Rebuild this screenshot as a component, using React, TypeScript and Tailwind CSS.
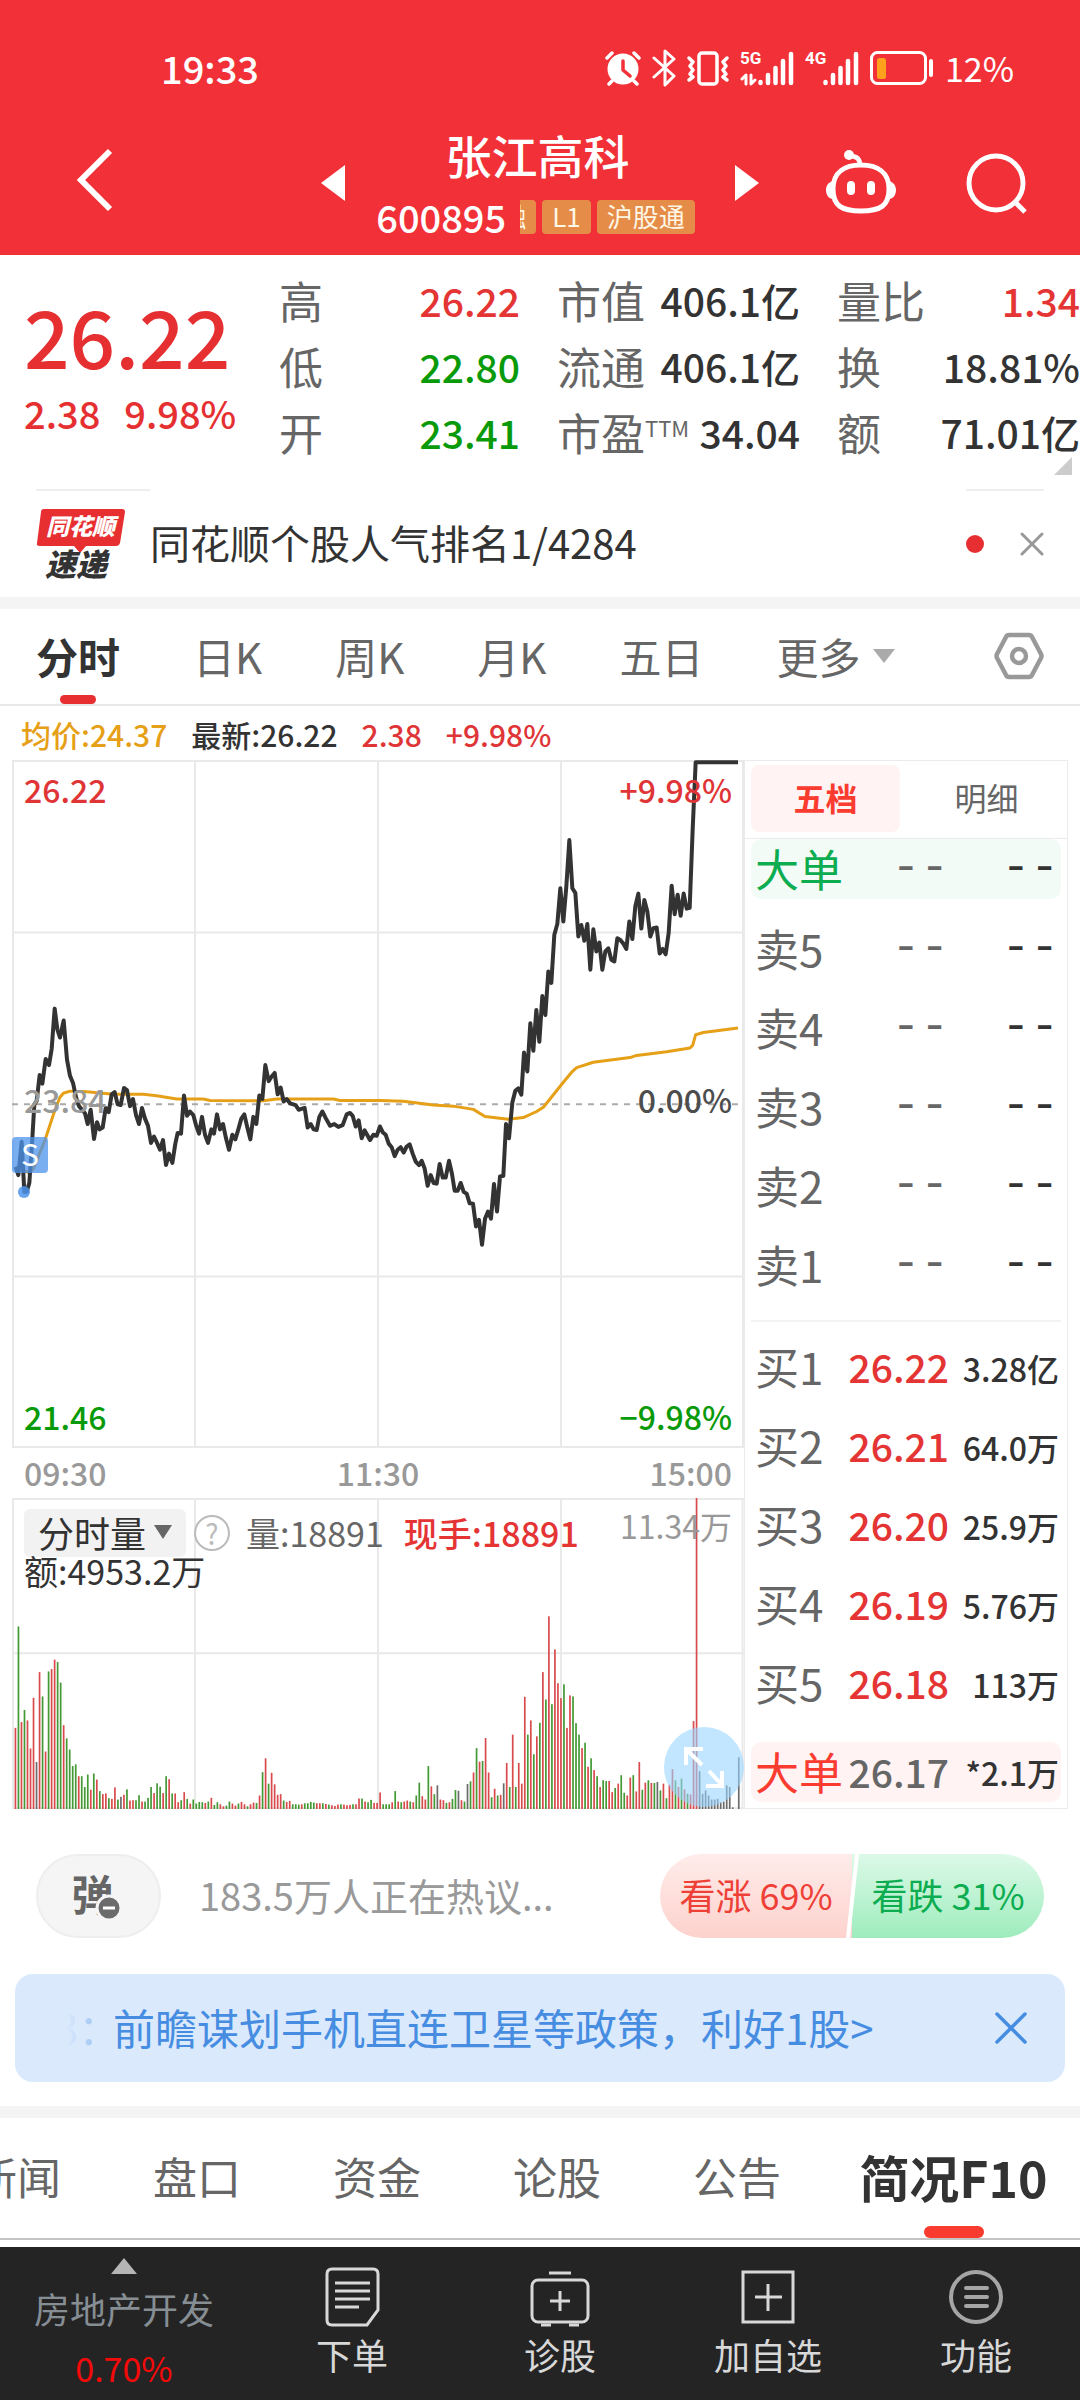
import type { ReactNode } from "react"
import clsx from "clsx"

// Minute prices as [x, y] in chart units, one array per session
const MORNING: number[][] = [
  [47, 1195], [55, 1218], [65, 1125], [73, 1265], [80, 1265], [88, 1240], [97, 1115], [103, 1020], [110, 1010],
  [119, 938], [127, 962], [137, 893], [147, 910], [155, 865], [164, 752], [172, 810], [180, 833], [191, 785],
  [201, 895], [210, 940], [219, 960], [228, 1000], [237, 1025], [246, 1035], [255, 1045], [263, 1075], [272, 1035],
  [282, 1117], [291, 1070], [299, 1090], [308, 1085], [317, 1030], [326, 1042], [335, 992], [344, 986], [353, 1020],
  [362, 1022], [372, 974], [381, 980], [390, 1025], [399, 1005], [408, 1050], [417, 1075], [426, 1030], [435, 1060],
  [444, 1080], [453, 1128], [462, 1110], [471, 1128], [480, 1147], [489, 1120], [498, 1190], [507, 1158], [517, 1184],
  [526, 1130], [533, 1100], [543, 1102], [552, 995], [561, 1052], [570, 1040], [580, 1050], [588, 1078], [597, 1102],
  [606, 1055], [615, 1105], [624, 1128], [634, 1090], [642, 1102], [651, 1048], [660, 1090], [669, 1075], [678, 1115],
  [687, 1147], [697, 1105], [706, 1118], [715, 1090], [724, 1060], [733, 1048], [742, 1085], [751, 1118], [760, 1055],
  [769, 1075], [778, 995], [787, 1005], [796, 910], [806, 955], [815, 942], [824, 932], [833, 992], [842, 973],
  [851, 1012], [860, 1005], [870, 1017], [887, 1022], [896, 1035], [914, 1030], [923, 1085], [932, 1075], [941, 1090],
  [950, 1092], [958, 1055], [967, 1040], [978, 1060], [990, 1080], [1003, 1075], [1015, 1083], [1028, 1078],
  [1040, 1048], [1050, 1044], [1058, 1052], [1067, 1082], [1076, 1065], [1085, 1115], [1094, 1093], [1103, 1108],
]
const AFTERNOON: number[][] = [
  [0, 1120], [10, 1105], [20, 1108], [30, 1082], [38, 1098], [47, 1105], [56, 1130], [65, 1140], [74, 1165], [83, 1147],
  [92, 1140], [101, 1155], [110, 1138], [119, 1132], [128, 1158], [137, 1180], [147, 1190], [155, 1178], [164, 1200],
  [173, 1248], [182, 1218], [191, 1240], [200, 1242], [209, 1187], [218, 1225], [227, 1225], [237, 1178], [246, 1215],
  [254, 1262], [263, 1262], [272, 1240], [281, 1265], [290, 1270], [299, 1297], [309, 1298], [318, 1362], [327, 1343],
  [336, 1413], [345, 1340], [354, 1320], [363, 1340], [372, 1243], [381, 1320], [390, 1222], [400, 1220], [408, 1075],
  [417, 1115], [427, 1015], [436, 982], [445, 975], [454, 993], [462, 875], [472, 928], [481, 793], [490, 870],
  [499, 756], [508, 845], [517, 717], [526, 770], [535, 648], [544, 680], [553, 545], [562, 515], [571, 415],
  [580, 508], [589, 410], [598, 280], [607, 415], [616, 428], [625, 550], [634, 518], [643, 562], [652, 515],
  [661, 643], [670, 530], [679, 592], [688, 567], [697, 643], [706, 592], [715, 583], [724, 615], [733, 620],
  [742, 555], [751, 560], [760, 570], [769, 585], [778, 508], [787, 557], [796, 465], [805, 430], [814, 528],
  [823, 448], [832, 480], [841, 550], [850, 527], [860, 525], [869, 598], [878, 585], [887, 600], [896, 540],
  [905, 408], [914, 488], [923, 433], [932, 492], [941, 430], [950, 472], [959, 470], [968, 250], [977, 62], [1104, 62],
]
const AVG_MORNING: number[][] = [
  [47, 1195], [88, 1212], [100, 1200], [135, 1120], [165, 1035], [180, 1000], [190, 989], [210, 983], [260, 985],
  [340, 992], [430, 992], [470, 996], [530, 1005], [610, 1005], [630, 1009], [790, 1010], [830, 1005], [1000, 1005],
  [1020, 1009], [1100, 1009],
]
const AVG_AFTERNOON: number[][] = [
  [30, 1009], [100, 1011], [190, 1022], [250, 1025], [310, 1034], [345, 1054], [415, 1062], [460, 1057], [500, 1040],
  [520, 1028], [540, 1005], [580, 958], [605, 930], [620, 917], [670, 902], [780, 889], [800, 883], [890, 873],
  [960, 862], [968, 855], [977, 825], [1000, 819], [1104, 806],
]

const toPoints = (am: number[][], pm: number[][]) =>
  [...am, ...pm.map(([x, y]) => [x + 1110, y])].map((p) => p.join(",")).join(" ")

// Volume per minute: colour letter + height
const VOLUME = (
  "r240 g540 r257 g293 r262 r179 r329 k139 r405 g333 r170 g407 r414 r442 g435 g374 r248 g209 g176 g127 " +
  "g132 r97 g97 g65 g102 r57 g105 r87 g53 r44 r46 g32 r30 r64 g28 k36 r42 g58 r25 r26 " +
  "g26 g41 r22 g22 g33 g65 r47 g76 g66 r47 g97 r88 g46 r46 r20 g26 r50 g30 r16 g28 " +
  "g16 g21 g20 r18 g22 r33 g12 g20 r14 r8 g10 g22 r16 r10 g16 r21 r14 g8 r14 r19 " +
  "g18 r40 g109 r150 g75 r107 r73 r42 r44 g25 r21 r24 g14 g14 g13 r14 g17 g17 g21 g19 " +
  "r17 r17 g17 r15 g13 r11 r9 r13 g14 r13 r11 r12 g14 r14 r31 g31 r22 g20 g27 r18 " +
  "r18 r49 g14 g14 g14 r20 g53 r22 g20 r22 r25 g22 r20 g40 g78 r38 r28 g127 r67 g44 " +
  "k70 r28 r26 g18 r20 g30 g56 k54 r26 g22 k74 g82 r108 g180 r140 g142 r210 r108 g35 r60 " +
  "g40 r42 k76 r136 g65 r220 g65 r136 r75 r332 g220 r262 g162 r215 g255 r405 g324 r570 g310 r472 " +
  "r372 r328 g369 r240 r336 g333 g254 g220 r180 g196 r125 g150 r115 g97 r65 g85 g83 r83 r50 g62 " +
  "r75 g100 g48 r40 r93 g100 r52 r139 g57 r78 g85 r77 g77 k80 g55 r75 g32 r72 r118 g85 " +
  "r65 g90 r58 g45 r43 r260 r920 k112 k45 k55 k40 k28 k28 k30 k20 k22 k70 k65 k5 k0 k153"
).split(" ")

const BAR_COLORS: Record<string, string> = { r: "#d94a4c", g: "#439a35", k: "#6b6b6b" }

const STATS = [
  ["高", "26.22", "text-[#e43434]"],
  ["市值", "406.1亿", "text-[#333]"],
  ["量比", "1.34", "text-[#e43434]"],
  ["低", "22.80", "text-[#099a09]"],
  ["流通", "406.1亿", "text-[#333]"],
  ["换", "18.81%", "text-[#333]"],
  ["开", "23.41", "text-[#099a09]"],
  ["市盈", "34.04", "text-[#333]"],
  ["额", "71.01亿", "text-[#333]"],
]

const SELLS = ["卖5", "卖4", "卖3", "卖2", "卖1"].map((label) => ({ label, price: "--", qty: "--" }))
const BUYS = [
  { label: "买1", price: "26.22", qty: "3.28亿" },
  { label: "买2", price: "26.21", qty: "64.0万" },
  { label: "买3", price: "26.20", qty: "25.9万" },
  { label: "买4", price: "26.19", qty: "5.76万" },
  { label: "买5", price: "26.18", qty: "113万" },
]

function StatusBar() {
  return (
    <div className="flex h-[136px] items-center justify-between pr-[66px] pl-[161px] text-white">
      <span className="text-[38px] leading-9 font-medium">19:33</span>
      <div className="flex items-center gap-[11px]">
        {/* alarm */}
        <svg width="36" height="36" viewBox="0 0 36 36" fill="none">
          <circle cx="18" cy="19" r="15.5" fill="#fff" />
          <path d="M2 8l5-5M34 8l-5-5M7 31l-3 3M29 31l3 3" stroke="#fff" strokeWidth="3.5" strokeLinecap="round" />
          <path d="M18 11v9l7 6" stroke="#f23038" strokeWidth="3.5" strokeLinecap="round" strokeLinejoin="round" />
        </svg>
        {/* bluetooth */}
        <svg width="24" height="38" viewBox="0 0 24 38" fill="none" stroke="#fff" strokeWidth="3" strokeLinecap="round" strokeLinejoin="round">
          <path d="M2 9l20 18-9 9V2l9 8L2 28" />
        </svg>
        {/* vibrate */}
        <svg width="42" height="36" viewBox="0 0 42 36" fill="none" stroke="#fff" strokeWidth="3.5" strokeLinecap="round" strokeLinejoin="round">
          <rect x="12" y="3" width="18" height="31" rx="3" />
          <path d="M2 8l4 4-3 4 3 4-3 4 3 3-4 3M40 8l-4 4 3 4-3 4 3 4-3 3 4 3" />
        </svg>
        <Signal label="5G" arrows />
        <Signal label="4G" />
        {/* battery */}
        <svg width="64" height="36" viewBox="0 0 64 36" fill="none">
          <rect x="1.5" y="2.5" width="54" height="31" rx="6" stroke="#fff" strokeWidth="3" />
          <rect x="7" y="8" width="9" height="21" rx="2.5" fill="#ffa11c" />
          <rect x="59" y="9" width="4" height="18" rx="2" fill="#fff" />
        </svg>
        <span className="text-[34px] leading-9">12%</span>
      </div>
    </div>
  )
}

function Signal({ label, arrows }: { label: string; arrows?: boolean }) {
  return (
    <div className="relative h-9 w-[54px]">
      <span className="absolute top-0 left-0 font-['Roboto'] text-[17px] leading-4 font-bold">{label}</span>
      <svg className="absolute inset-0" width="54" height="36" viewBox="0 0 54 36" fill="none" stroke="#fff" strokeLinecap="round">
        <path d="M20.5 32v1M28 25v8M35.5 18v15M43 11v22M51 4v29" strokeWidth="4.5" />
        {arrows && <path d="M6 34V25l-4 4M11 25v9l4-4" strokeWidth="3" strokeLinejoin="round" />}
      </svg>
    </div>
  )
}

function TitleBar() {
  return (
    <div className="flex h-[119px] items-start justify-between pr-[52px] pl-[72px] text-white">
      <button aria-label="返回" className="pt-3">
        <svg width="44" height="64" viewBox="0 0 44 64" fill="none" stroke="#fff" strokeWidth="6">
          <path d="M38 3L9 32l29 29" />
        </svg>
      </button>
      <div className="flex items-start pl-[138px]">
        <button aria-label="上一只" className="pt-[29px]">
          <svg width="24" height="36" viewBox="0 0 24 36" fill="#fff"><path d="M24 0v36L0 18z" /></svg>
        </button>
        <div className="flex w-[390px] flex-col items-center pr-1">
          <h1 className="text-[46px] leading-9 font-medium">张江高科</h1>
          <div className="mt-[27px] flex items-center gap-[6px] pr-1 text-[26px] leading-8 text-[#fff7e6]">
            <span className="mr-2 text-[38px] leading-9 font-medium text-white">600895</span>
            <span className="flex h-[34px] w-4 justify-end overflow-hidden rounded-r-sm bg-[#e58d48] pr-[10px]">融</span>
            <span className="h-[34px] rounded-sm bg-[#e58d48] px-[10px]">L1</span>
            <span className="h-[34px] rounded-sm bg-[#e58d48] px-[10px]">沪股通</span>
          </div>
        </div>
        <button aria-label="下一只" className="pt-[29px]">
          <svg width="24" height="36" viewBox="0 0 24 36" fill="#fff"><path d="M0 0v36l24-18z" /></svg>
        </button>
      </div>
      <div className="flex items-start gap-[67px] pt-[13px]">
        <button aria-label="智能助手">
          <svg width="72" height="66" viewBox="0 0 72 66" fill="none">
            <path d="M36 16C20 16 8 23 8 40s9 22 28 22 28-5 28-22-12-24-28-24z" stroke="#fff" strokeWidth="5" />
            <path d="M8 32c-4 1-7 4-7 9s3 9 7 9zM64 32c4 1 7 4 7 9s-3 9-7 9z" fill="#fff" />
            <path d="M35 16c0-6-3-9-10-9" stroke="#fff" strokeWidth="4.5" />
            <circle cx="24" cy="6" r="5" fill="#fff" />
            <path d="M26 36v6M46 36v6" stroke="#fff" strokeWidth="8" strokeLinecap="round" />
          </svg>
        </button>
        <button aria-label="搜索">
          <svg width="64" height="66" viewBox="0 0 64 66" fill="none" stroke="#fff" strokeWidth="5">
            <circle cx="32" cy="34" r="27" />
            <path d="M51 53l10 10" />
          </svg>
        </button>
      </div>
    </div>
  )
}

function Quote() {
  return (
    <section className="relative flex h-[234px] justify-between pl-6">
      <div className="pt-[39px] text-[#e62f31]">
        <div className="text-[80px] leading-[80px] font-medium">26.22</div>
        <div className="mt-[19px] flex gap-6 text-[38px] leading-10 font-medium">
          <span>2.38</span>
          <span>9.98%</span>
        </div>
      </div>
      <dl className="mt-3 grid h-[198px] w-[801px] grid-cols-[241px_243px_243px] justify-between leading-[66px]">
        {STATS.map(([label, value, color]) => (
          <div key={label} className="flex h-[66px] justify-between whitespace-nowrap">
            <dt className="flex text-[44px] text-[#666]">
              {label}
              {label === "市盈" && <sup className="top-0 pt-4 text-[22px] leading-6">TTM</sup>}
            </dt>
            <dd className={clsx("text-[39px] font-medium", color)}>{value}</dd>
          </div>
        ))}
      </dl>
      <svg className="absolute right-2 bottom-[14px]" width="18" height="18" viewBox="0 0 18 18" fill="#ccc">
        <path d="M18 0v18H0z" />
      </svg>
    </section>
  )
}

function Notice() {
  return (
    <section className="mx-9 flex h-[108px] items-center">
      <div className="relative -mt-px h-[108px] w-[114px] border-t-2 border-[#eee]">
        <svg className="absolute top-4 left-0" width="90" height="46" viewBox="0 0 90 46" fill="#e72f32">
          <path d="M8 2h78q3 0 3 3l-5 31q-1 3-4 3H50l-6 7-6-7H4q-4 0-3-3L5 5q0-3 3-3z" />
        </svg>
        <span className="absolute top-5 left-[10px] text-[23px] leading-7 font-black text-white italic">同花顺</span>
        <span className="absolute top-14 left-[9px] text-[31px] leading-8 font-black text-[#333] italic">速递</span>
      </div>
      <p className="flex-1 pb-[2px] text-[40px] text-[#333]">同花顺个股人气排名1/4284</p>
      <div className="-mt-px flex h-[108px] w-[78px] items-center justify-between border-t-2 border-[#eee]">
        <span className="size-[18px] rounded-full bg-[#e72f32]" />
        <button aria-label="关闭">
          <svg width="24" height="24" viewBox="0 0 24 24" stroke="#999" strokeWidth="3" strokeLinecap="round"><path d="M2 2l20 20M22 2L2 22" /></svg>
        </button>
      </div>
    </section>
  )
}

function PeriodTabs() {
  return (
    <nav className="flex h-[97px] items-center gap-[73px] border-b-2 border-[#e8e8e8] px-9 pb-[2px] text-[42px] whitespace-nowrap text-[#666]">
      <button className="relative h-full font-bold text-[#333]">
        分时
        <span className="absolute -bottom-[2px] left-6 h-[9px] w-9 rounded-full bg-[#e72f32]" />
      </button>
      <button>日K</button>
      <button>周K</button>
      <button>月K</button>
      <button>五日</button>
      <button className="flex items-center gap-3">
        更多
        <svg width="24" height="16" viewBox="0 0 24 16" fill="#aaa"><path d="M1 1h22L12 15z" /></svg>
      </button>
      <button aria-label="设置" className="ml-auto">
        <svg width="50" height="48" viewBox="0 0 50 48" fill="none" stroke="#999" strokeWidth="4.5" strokeLinejoin="round">
          <path d="M15 3h20q2 0 3 2l9 17q1 2 0 4l-9 17q-1 2-3 2H15q-2 0-3-2L3 26q-1-2 0-4l9-17q1-2 3-2z" />
          <circle cx="25" cy="24" r="7" />
        </svg>
      </button>
    </nav>
  )
}

function PriceChart() {
  return (
    <div className="relative h-[688px] text-[32px] leading-8 font-medium">
      <svg className="absolute inset-0 size-full" viewBox="36 56 2196 1926" preserveAspectRatio="none" fill="none">
        <g stroke="#e9e9e9" strokeWidth="2">
          <path d="M36 59H2232M36 539H2232M36 1502H2232M36 1979H2232" vectorEffect="non-scaling-stroke" />
          <path d="M39 56V1982M585 56V1982M1134 56V1982M1683 56V1982M2229 56V1982" vectorEffect="non-scaling-stroke" />
        </g>
        <path d="M36 1020H2214" stroke="#aaa" strokeWidth="2" strokeDasharray="6 6" vectorEffect="non-scaling-stroke" />
        <polyline points={toPoints(AVG_MORNING, AVG_AFTERNOON)} stroke="#e6a017" strokeWidth="3" strokeLinejoin="round" vectorEffect="non-scaling-stroke" />
        <polyline points={toPoints(MORNING, AFTERNOON)} stroke="#333" strokeWidth="4" strokeLinejoin="round" vectorEffect="non-scaling-stroke" />
      </svg>
      <span className="absolute top-[13px] left-3 text-[#e03536]">26.22</span>
      <span className="absolute top-[13px] right-3 text-[#e03536]">+9.98%</span>
      <span className="absolute top-[323px] left-3 text-[#999]">23.84</span>
      <span className="absolute top-[323px] right-3 text-[#4d4d4d]">0.00%</span>
      <span className="absolute bottom-4 left-3 text-[#099a09]">21.46</span>
      <span className="absolute right-3 bottom-4 text-[#099a09]">−9.98%</span>
      {/* sell marker */}
      <span className="absolute top-[377px] left-0 h-9 w-9 rounded-sm bg-[#4c93ec]/75 text-center text-[30px] leading-8 font-normal text-white">S</span>
      <span className="absolute top-[426px] left-[6px] size-3 rounded-full bg-[#4c93ec]/85" />
    </div>
  )
}

function VolumeChart() {
  return (
    <div className="relative h-[311px]">
      <svg className="absolute inset-0 size-full" viewBox="25 615 1552 920" preserveAspectRatio="none" fill="none">
        <g stroke="#e9e9e9" strokeWidth="2">
          <path d="M25 618H1577M25 1074H1577M25 1533H1577" vectorEffect="non-scaling-stroke" />
          <path d="M27 615V1535M413 615V1535M801 615V1535M1189 615V1535M1574 615V1535" vectorEffect="non-scaling-stroke" />
        </g>
        {VOLUME.map((v, i) => (
          <rect key={i} x={30.5 + i * 6.39} y={1535 - Number(v.slice(1))} width="3.6" height={Number(v.slice(1))} fill={BAR_COLORS[v[0]]} />
        ))}
      </svg>
      <div className="relative flex items-center px-3 pt-[11px] text-[34px] leading-8 whitespace-nowrap">
        <button className="flex h-12 w-[162px] items-center justify-center gap-2 rounded-md bg-[#f2f2f2] pb-[2px] text-[36px] text-[#333]">
          分时量
          <svg width="18" height="14" viewBox="0 0 18 14" fill="#666"><path d="M0 0h18L9 14z" /></svg>
        </button>
        <button aria-label="帮助" className="ml-2 size-9 rounded-full border-2 border-[#bbb] text-[28px] text-[#bbb]">?</button>
        <span className="ml-4 text-[#666]">量:18891</span>
        <span className="ml-5 font-medium text-[#e43434]">现手:18891</span>
        <span className="mb-4 ml-auto text-[32px] text-[#999]">11.34万</span>
      </div>
      <p className="relative -mt-[2px] pl-3 text-[34px] leading-8 text-[#333]">额:4953.2万</p>
      <button aria-label="放大" className="absolute right-0 bottom-[2px] flex size-20 items-center justify-center rounded-full bg-[#9ad6ff]/60">
        <svg width="44" height="44" viewBox="0 0 44 44" fill="none" stroke="#fff" strokeWidth="4">
          <path d="M4 20V4h17M5 5l15 15M40 26v15H24M40 40L27 26" />
        </svg>
      </button>
    </div>
  )
}

type BookRow = { label: string; price: string; qty: string }

function BookTable({ rows, tone }: { rows: BookRow[]; tone?: "buy" | "sell" }) {
  return (
    <table className={clsx("w-full table-fixed", tone === "sell" && "bg-[#f2fbf6]", tone === "buy" && "bg-[#fff3f3]", tone && "rounded-[10px]")}>
      <tbody>
        {rows.map(({ label, price, qty }) => {
          const empty = price === "--"
          return (
            <tr key={label} className={tone ? "h-[60px]" : "h-[79px]"}>
              <th
                scope="row"
                className={clsx(
                  "w-[94px] pb-[3px] pl-1 text-left text-[44px] leading-[56px] font-normal whitespace-nowrap",
                  tone === "sell" ? "text-[#0cac50]" : tone === "buy" ? "text-[#fa3b30]" : "text-[#666]",
                )}
              >
                {label}
              </th>
              <td
                className={clsx(
                  "w-[104px] pb-[3px] text-right leading-[56px]",
                  empty ? "font-['Liberation_Mono'] text-[48px] text-[#666]" : "text-[39px] font-medium",
                  !empty && (tone === "buy" ? "text-[#666]" : "text-[#e43434]"),
                )}
              >
                {price}
              </td>
              <td className={clsx("pr-[2px] text-right leading-[56px] text-[#333]", empty ? "pb-[3px] font-['Liberation_Mono'] text-[48px]" : "text-[32px] font-medium")}>
                {qty}
              </td>
            </tr>
          )
        })}
      </tbody>
    </table>
  )
}

function OrderBook() {
  return (
    <aside className="w-[324px] shrink-0 border border-[#ebebeb]">
      <div className="flex h-[78px] items-start border-b border-[#ebebeb] px-[6px] pt-1 text-[32px]">
        <button className="h-[67px] flex-1 rounded-lg bg-[#fff3f3] pb-1 font-bold text-[#fa3b30]">五档</button>
        <button className="h-[67px] flex-1 pb-1 pl-3 text-[#666]">明细</button>
      </div>
      <div className="px-[6px]">
        <BookTable rows={[{ label: "大单", price: "--", qty: "--" }]} tone="sell" />
        <div className="mt-[11px] border-b-2 border-[#f3f3f3] pb-[15px]">
          <BookTable rows={SELLS} />
        </div>
        <div className="pt-[6px] pb-[19px]">
          <BookTable rows={BUYS} />
        </div>
        <BookTable rows={[{ label: "大单", price: "26.17", qty: "*2.1万" }]} tone="buy" />
      </div>
    </aside>
  )
}

function Discussion() {
  return (
    <section className="flex items-center px-9 pt-[45px] text-[36px]">
      <button aria-label="弹幕" className="relative h-[84px] w-[125px] rounded-full border-2 border-[#eee] bg-[#f5f5f5] pr-3 pb-2 text-[42px] font-bold text-[#666]">
        弹
        <svg className="absolute right-9 bottom-[14px]" width="28" height="28" viewBox="0 0 28 28">
          <circle cx="14" cy="14" r="12" fill="#6b6b6b" stroke="#f5f5f5" strokeWidth="3" />
          <path d="M8 14h12" stroke="#fff" strokeWidth="3" />
        </svg>
      </button>
      <span className="ml-[38px] flex-1 pb-1 text-[38px] text-[#999]">183.5万人正在热议...</span>
      <div className="relative flex h-[84px] w-[384px] overflow-hidden rounded-full">
        <button className="h-full flex-1 bg-gradient-to-b from-[#feecea] to-[#fdd2cd] pb-1 text-[#ee4036]">看涨 69%</button>
        <button className="h-full flex-1 bg-gradient-to-b from-[#dcf9e8] to-[#9decbd] pb-1 text-[#0cac50]">看跌 31%</button>
        {/* slanted split between the two halves */}
        <svg className="absolute top-0 left-[182px]" width="20" height="84" viewBox="0 0 20 84"><path d="M15 0L6 84" stroke="#fff" strokeWidth="4" /></svg>
      </div>
    </section>
  )
}

function Banner() {
  return (
    <section className="mx-[15px] mt-9 flex h-[108px] items-center rounded-[18px] bg-[#dae9fc] pr-[38px] pl-10 text-[42px] whitespace-nowrap text-[#468de2]">
      <span className="w-[58px] overflow-hidden bg-gradient-to-r from-[#dae9fc] from-20% to-[#7fb0ec] bg-clip-text pb-1 text-transparent">3：</span>
      <a href="#policy" className="flex-1 pb-1">前瞻谋划手机直连卫星等政策，利好1股&gt;</a>
      <button aria-label="关闭">
        <svg width="32" height="32" viewBox="0 0 32 32" stroke="#468de2" strokeWidth="3.5" strokeLinecap="round"><path d="M2 2l28 28M30 2L2 30" /></svg>
      </button>
    </section>
  )
}

function SectionTabs() {
  return (
    <nav className="mt-6 h-[141px] overflow-hidden border-t-12 border-[#f4f4f4]">
      <div className="flex h-[122px] items-center border-b-2 border-[#c4c4c4] text-[44px] whitespace-nowrap text-[#666]">
        <div className="-ml-[73px] flex pb-1">
          {["新闻", "盘口", "资金", "论股", "公告"].map((t) => (
            <button key={t} className="w-[180px]">{t}</button>
          ))}
        </div>
        <button className="relative h-full flex-1 pb-1 text-[50px] font-bold text-[#333]">
          简况F10
          <span className="absolute bottom-0 left-1/2 h-3 w-[60px] -translate-x-1/2 rounded-full bg-[#fa3b30]" />
        </button>
      </div>
    </nav>
  )
}

function NavItem({ label, children }: { label: string; children: ReactNode }) {
  return (
    <button className="flex flex-1 flex-col items-center pt-5 text-[#d8d8d8]">
      <svg width="60" height="60" viewBox="0 0 60 60" fill="none" stroke="currentColor" strokeWidth="3">
        {children}
      </svg>
      <span className="mt-[7px] text-[36px] leading-10">{label}</span>
    </button>
  )
}

function BottomNav() {
  return (
    <footer className="flex h-[153px] bg-[#242424]">
      <button className="flex w-[248px] flex-col items-center pt-[11px]">
        <svg width="26" height="16" viewBox="0 0 26 16" fill="#b5b5b5"><path d="M13 0l13 16H0z" /></svg>
        <span className="mt-[14px] text-[36px] leading-10 text-[#868e94]">房地产开发</span>
        <span className="mt-5 text-[34px] leading-10 text-[#f50a0a]">0.70%</span>
      </button>
      <NavItem label="下单">
        <path d="M10 2h41q5 0 5 5v36L45 58H10q-5 0-5-5V7q0-5 5-5z" />
        <path d="M13 16h35M13 24h35M13 32h35M13 40h24" />
      </NavItem>
      <NavItem label="诊股">
        <rect x="2" y="13" width="56" height="42" rx="6" />
        <path d="M19 6h22M11 58h10M39 58h10M30 24v20M20 34h20" />
      </NavItem>
      <NavItem label="加自选">
        <path d="M5 5h50v50H5zM30 17v27M17 30h27" />
      </NavItem>
      <NavItem label="功能">
        <g stroke="#a5a5a5" strokeWidth="4">
          <circle cx="30" cy="30" r="25" />
          <path d="M20 21h21M20 30h21M20 39h21" strokeLinecap="round" />
        </g>
      </NavItem>
    </footer>
  )
}

export default function App() {
  return (
    <div className="w-full overflow-hidden bg-white font-['Noto_Sans_CJK_SC',sans-serif]">
      <header className="bg-[#f23038]">
        <StatusBar />
        <TitleBar />
      </header>
      <Quote />
      <Notice />
      <div className="h-3 bg-[#f4f4f4]" />
      <PeriodTabs />
      <main>
        <div className="flex h-[54px] items-center gap-6 pt-[2px] pl-[21px] text-[30px] font-medium text-[#e03536]">
          <span className="text-[#e6a017]">均价:24.37</span>
          <span className="text-[#333]">最新:26.22</span>
          <span>2.38</span>
          <span>+9.98%</span>
        </div>
        <div className="flex px-3">
          <div className="min-w-0 flex-1">
            <PriceChart />
            <div className="flex h-[50px] items-center justify-between px-3 pb-[2px] text-[32px] font-medium text-[#999]">
              <span>09:30</span>
              <span>11:30</span>
              <span>15:00</span>
            </div>
            <VolumeChart />
          </div>
          <OrderBook />
        </div>
        <Discussion />
        <Banner />
        <SectionTabs />
      </main>
      <BottomNav />
    </div>
  )
}
